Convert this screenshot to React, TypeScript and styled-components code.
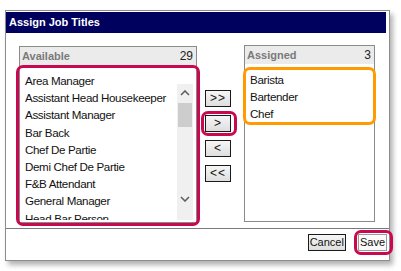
import React from "react";
import styled, { createGlobalStyle } from "styled-components";

const available = [
  "Area Manager",
  "Assistant Head Housekeeper",
  "Assistant Manager",
  "Bar Back",
  "Chef De Partie",
  "Demi Chef De Partie",
  "F&B Attendant",
  "General Manager",
  "Head Bar Person",
];

const assigned = ["Barista", "Bartender", "Chef"];

const GlobalStyle = createGlobalStyle`
  html, body {
    margin: 0;
    background: #ffffff;
  }
  body {
    font-family: "Liberation Sans", Arial, sans-serif;
  }
`;

const Page = styled.div`
  width: 401px;
  height: 271px;
  padding: 10px 0 0 5px;
  box-sizing: border-box;
`;

const Dialog = styled.div`
  width: 385px;
  height: 251px;
  box-sizing: border-box;
  border: 1px solid #8c8c8c;
  background: #ffffff;
  box-shadow: 3px 4px 5px rgba(0, 0, 0, 0.3);
  display: flex;
  flex-direction: column;
`;

const TitleBar = styled.div`
  margin: 1px 3px 0 0;
  height: 21px;
  background: #00005e;
  color: #ffffff;
  font-weight: bold;
  font-size: 11px;
  line-height: 21px;
  padding-left: 3px;
`;

const Body = styled.div`
  flex: 1;
  display: flex;
  align-items: flex-start;
  padding: 13px 0 0 13px;
`;

const Panel = styled.div<{ $width: number; $top?: number; $left?: number }>`
  width: ${(p) => p.$width}px;
  height: 177px;
  margin-top: ${(p) => p.$top ?? 0}px;
  margin-left: ${(p) => p.$left ?? 0}px;
  box-sizing: border-box;
  border: 1px solid #8a8a8a;
  display: flex;
  flex-direction: column;
`;

const PanelHeader = styled.div`
  height: 18px;
  flex: none;
  background: #ebebeb;
  display: flex;
  justify-content: space-between;
  align-items: center;
  padding: 0 3px 0 2px;
  font-size: 11px;
`;

const HeaderLabel = styled.span`
  font-weight: bold;
  color: #7a7a7a;
`;

const HeaderCount = styled.span`
  color: #222222;
  font-size: 12px;
`;

const ListArea = styled.div`
  position: relative;
  flex: 1;
  display: flex;
  background: #ffffff;
`;

const Items = styled.ul`
  flex: 1;
  margin: 0;
  padding: 7px 0 0 5px;
  list-style: none;
  overflow: hidden;
  height: 155px;
  box-sizing: border-box;
`;

const Item = styled.li`
  font-size: 11.6px;
  line-height: 17.2px;
  color: #111111;
  white-space: nowrap;
  letter-spacing: -0.35px;
`;

const Scrollbar = styled.div`
  width: 16px;
  margin: 19px 3px 2px 0;
  background: #f0f0f0;
  display: flex;
  flex-direction: column;
  align-items: stretch;
`;

const ScrollArrow = styled.div<{ $bottom?: number }>`
  height: 17px;
  margin-bottom: ${(p) => p.$bottom ?? 0}px;
  display: flex;
  align-items: center;
  justify-content: center;
`;

const Thumb = styled.div`
  height: 24px;
  margin: 2px 1px 0;
  background: #cdcdcd;
`;

const Track = styled.div`
  flex: 1;
`;

const Mover = styled.div`
  margin: 44px 0 0 8px;
  display: flex;
  flex-direction: column;
  gap: 8px;
`;

const Btn = styled.button<{ $plain?: boolean; $spaced?: boolean }>`
  position: relative;
  height: 17px;
  min-width: ${(p) => (p.$spaced ? 26 : 0)}px;
  box-sizing: border-box;
  padding: 0 ${(p) => (p.$spaced ? 4 : 1)}px;
  border: 1px solid ${(p) => (p.$plain ? "#9a9a9a" : "#1a1a1a")};
  border-radius: 0;
  background: ${(p) =>
    p.$plain ? "#fafafa" : "linear-gradient(#f6f6f6, #dedede)"};
  font-family: "Liberation Sans", Arial, sans-serif;
  font-size: ${(p) => (p.$spaced ? 12 : 11)}px;
  line-height: 15px;
  color: #111111;
  letter-spacing: ${(p) => (p.$spaced ? 1 : 0)}px;
`;

const Highlight = styled.span<{ $color: string; $inset: string }>`
  position: absolute;
  inset: ${(p) => p.$inset};
  border: 3px solid ${(p) => p.$color};
  border-radius: 7px;
  pointer-events: none;
`;

const Footer = styled.div`
  height: 26px;
  flex: none;
  border-top: 1px solid #7a7a7a;
  display: flex;
  justify-content: flex-end;
  align-items: flex-start;
  gap: 12px;
  padding: 5px 2px 0 0;
`;

const Chevron = ({ up }: { up?: boolean }) => (
  <svg width="10" height="6" viewBox="0 0 10 6">
    <path
      d={up ? "M1 5 L5 1 L9 5" : "M1 1 L5 5 L9 1"}
      fill="none"
      stroke="#606060"
      strokeWidth="1.6"
    />
  </svg>
);

const CRIMSON = "#c8094f";
const ORANGE = "#ff9a00";

export default function App() {
  return (
    <Page>
      <GlobalStyle />
      <Dialog>
        <TitleBar>Assign Job Titles</TitleBar>
        <Body>
          <Panel $width={178}>
            <PanelHeader>
              <HeaderLabel>Available</HeaderLabel>
              <HeaderCount>29</HeaderCount>
            </PanelHeader>
            <ListArea>
              <Items>
                {available.map((t) => (
                  <Item key={t}>{t}</Item>
                ))}
              </Items>
              <Scrollbar>
                <ScrollArrow>
                  <Chevron up />
                </ScrollArrow>
                <Thumb />
                <Track />
                <ScrollArrow $bottom={13}>
                  <Chevron />
                </ScrollArrow>
              </Scrollbar>
              <Highlight $color={CRIMSON} $inset="0 -4px -4px -4px" />
            </ListArea>
          </Panel>
          <Mover>
            <Btn $spaced>&gt;&gt;</Btn>
            <Btn $spaced>
              &gt;
              <Highlight $color={CRIMSON} $inset="-5px -7px -5px -5px" />
            </Btn>
            <Btn $spaced>&lt;</Btn>
            <Btn $spaced>&lt;&lt;</Btn>
          </Mover>
          <Panel $width={131} $top={-1} $left={13}>
            <PanelHeader>
              <HeaderLabel>Assigned</HeaderLabel>
              <HeaderCount>3</HeaderCount>
            </PanelHeader>
            <ListArea>
              <Items>
                {assigned.map((t) => (
                  <Item key={t}>{t}</Item>
                ))}
              </Items>
              <Highlight $color={ORANGE} $inset="3px -2px 96px -2px" />
            </ListArea>
          </Panel>
        </Body>
        <Footer>
          <Btn>Cancel</Btn>
          <Btn $plain>
            Save
            <Highlight $color={CRIMSON} $inset="-5px -7px -5px -5px" />
          </Btn>
        </Footer>
      </Dialog>
    </Page>
  );
}
